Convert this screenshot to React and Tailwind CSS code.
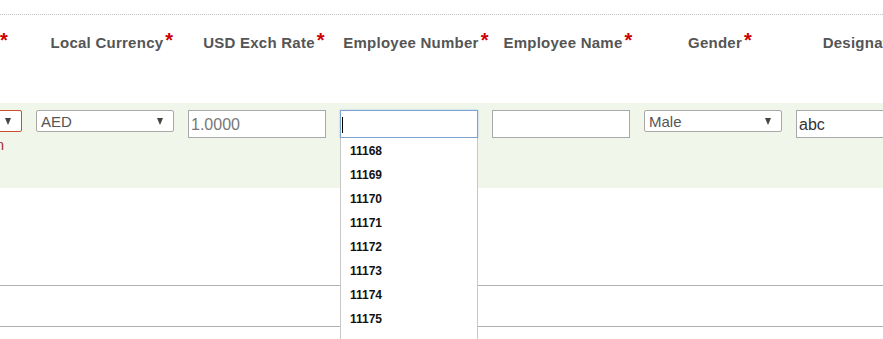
import React from 'react';

const font = { fontFamily: '"Liberation Sans", Arial, sans-serif' };

const headers = ['Department', 'Local Currency', 'USD Exch Rate', 'Employee Number', 'Employee Name', 'Gender', 'Designation'];

const employeeNumbers = ['11168', '11169', '11170', '11171', '11172', '11173', '11174', '11175'];

const Select = ({ value, error }) => (
    <div
        className={`flex items-center justify-between h-[22px] w-[138px] rounded-[2px] border bg-white pl-[4px] pr-[10px] text-[15px] text-[#555] ${error ? 'border-[#c8502a]' : 'border-[#a9a9a9]'}`}
    >
        <span className="leading-none">{value}</span>
        <span className="h-0 w-0 border-x-[3.5px] border-t-[7px] border-x-transparent border-t-[#444]" />
    </div>
);

const TextBox = ({ value, muted, focused }) => (
    <div
        className={`flex items-center h-[28px] w-[138px] border bg-white pt-[2px] text-[16px] leading-none ${muted ? 'text-[#777]' : 'text-[#333]'} ${focused ? 'border-[#7da2ce] pl-[1px] shadow-[0_0_2px_#a9c6ea]' : 'border-[#a9a9a9] pl-[2px]'}`}
    >
        {focused && <span className="h-[16px] w-px bg-black" />}
        {value}
    </div>
);

const Cursor = () => (
    <svg className="absolute left-[415px] top-[139px]" width="13" height="21" viewBox="0 0 13 21">
        <path
            d="M0.5 0.5 L0.5 16.5 L4.5 12.8 L7.2 19.5 L9.6 18.5 L7 12 L12 12 Z"
            fill="#fff"
            stroke="#000"
            strokeWidth="1"
        />
    </svg>
);

export default function App() {
    return (
        <div className="relative h-[339px] w-[883px] overflow-hidden bg-white" style={font}>
            <div className="h-[14px]" />
            <div className="border-t border-dotted border-[#c4c4c4]" />

            {/* header row */}
            <div className="ml-[-116px] flex h-[88px] pt-[16px]">
                {headers.map((h) => (
                    <div key={h} className="w-[152px] shrink-0 text-center">
                        <span className="whitespace-nowrap text-[15px] font-bold leading-[17px] tracking-[0.25px] text-[#555]">
                            {h}
                            <span className="relative top-[-1px] ml-[2px] text-[20px] leading-none text-[#c00]">*</span>
                        </span>
                    </div>
                ))}
            </div>

            {/* input row */}
            <div className="ml-[-116px] flex h-[85px] bg-[#f0f7ea] pt-[7px]">
                <div className="w-[152px] shrink-0">
                    <Select value="Dubai" error />
                    <div className="mt-[3px] w-[120px] whitespace-nowrap text-right text-[14px] leading-[20px] text-[#a52a2a]">
                        Select Location
                    </div>
                </div>
                <div className="w-[152px] shrink-0">
                    <Select value="AED" />
                </div>
                <div className="w-[152px] shrink-0">
                    <TextBox value="1.0000" muted />
                </div>
                <div className="relative w-[152px] shrink-0">
                    <TextBox focused />
                    <div className="absolute left-0 top-[28px] z-10 w-[138px] border-x border-[#c8c8c8] bg-white pt-px">
                        {employeeNumbers.map((n) => (
                            <div key={n} className="flex h-[24px] items-center pl-[9px] text-[12px] font-bold text-[#111]">
                                {n}
                            </div>
                        ))}
                        <div className="h-[40px]" />
                    </div>
                </div>
                <div className="w-[152px] shrink-0">
                    <TextBox />
                </div>
                <div className="w-[152px] shrink-0">
                    <Select value="Male" />
                </div>
                <div className="w-[152px] shrink-0">
                    <TextBox value="abc" />
                </div>
            </div>

            <div className="h-[97px]" />
            <div className="border-t border-[#b0b0b0]" />
            <div className="h-[40px]" />
            <div className="border-t border-[#b0b0b0]" />

            <Cursor />
        </div>
    );
}
